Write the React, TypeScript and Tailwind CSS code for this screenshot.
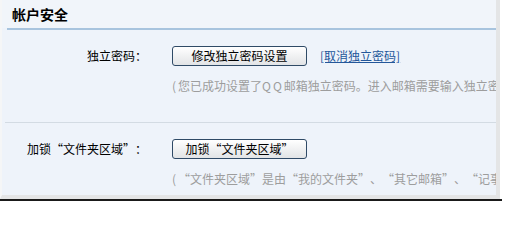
import React from "react";

const font = { fontFamily: '"SimSun", "Noto Sans CJK SC", sans-serif' };

function Q({ text }: { text: string }) {
  const parts: React.ReactNode[] = [];
  let buf = "";
  let k = 0;
  for (const ch of text) {
    if (ch === "“" || ch === "”") {
      if (buf) parts.push(buf);
      buf = "";
      parts.push(
        <span
          key={k++}
          className={
            ch === "“"
              ? "inline-block w-[12px] text-right"
              : "inline-block w-[12px] text-left"
          }
        >
          {ch}
        </span>
      );
    } else {
      buf += ch;
    }
  }
  if (buf) parts.push(buf);
  return <>{parts}</>;
}

function Btn({ children }: { children: React.ReactNode }) {
  return (
    <button className="h-[20px] w-[135px] shrink-0 rounded-[3px] border border-[#2f4a66] bg-gradient-to-b from-white to-[#e2e4e6] text-[12px] leading-[18px] text-black whitespace-nowrap">
      {children}
    </button>
  );
}

export default function App() {
  return (
    <div
      className="w-[506px] h-[203px] bg-white overflow-hidden text-[12px] leading-[12px]"
      style={font}
    >
      <div className="w-[500px] h-[199px] border-l-2 border-l-[#f5f6f7] border-r-4 border-r-[#e4e5e6] border-b-4 border-b-[#e4e5e6] bg-[#eef3fa] overflow-hidden">
        <div className="h-[28px] pl-[10px] flex items-center bg-[#f1f5fa] text-[14px] font-bold text-black">
          帐户安全
        </div>
        <div className="ml-[5px] h-[2px] bg-[#a8c4de]" />

        <div className="mt-[16px] flex items-center h-[20px]">
          <div className="w-[145px] text-right text-black">独立密码：</div>
          <div className="ml-[25px]">
            <Btn>修改独立密码设置</Btn>
          </div>
          <a className="ml-[13px] text-[#24579a] underline whitespace-nowrap">
            [取消独立密码]
          </a>
        </div>
        <div className="mt-[14px] pl-[170px] whitespace-nowrap text-[#9d9d9d]">
          <span className="inline-block w-[6px]">(</span>您已成功设置了
          <span className="tracking-[2px]">QQ</span>
          邮箱独立密码。进入邮箱需要输入独立密码。)
        </div>

        <div className="mt-[30px] ml-[3px] h-px bg-[#d3dbe3]" />

        <div className="mt-[16px] flex items-center h-[20px]">
          <div className="w-[145px] text-right text-black whitespace-nowrap">
            <Q text="加锁“文件夹区域”：" />
          </div>
          <div className="ml-[25px]">
            <Btn>
              <Q text="加锁“文件夹区域”" />
            </Btn>
          </div>
        </div>
        <div className="mt-[14px] pl-[170px] whitespace-nowrap text-[#9d9d9d]">
          <span className="inline-block w-[6px]">(</span>
          <Q text="“文件夹区域”是由“我的文件夹”、“其它邮箱”、“记事本”等组成。)" />
        </div>
      </div>
      <div className="w-[502px] h-[2px] bg-[#1a1a1a]" />
    </div>
  );
}
